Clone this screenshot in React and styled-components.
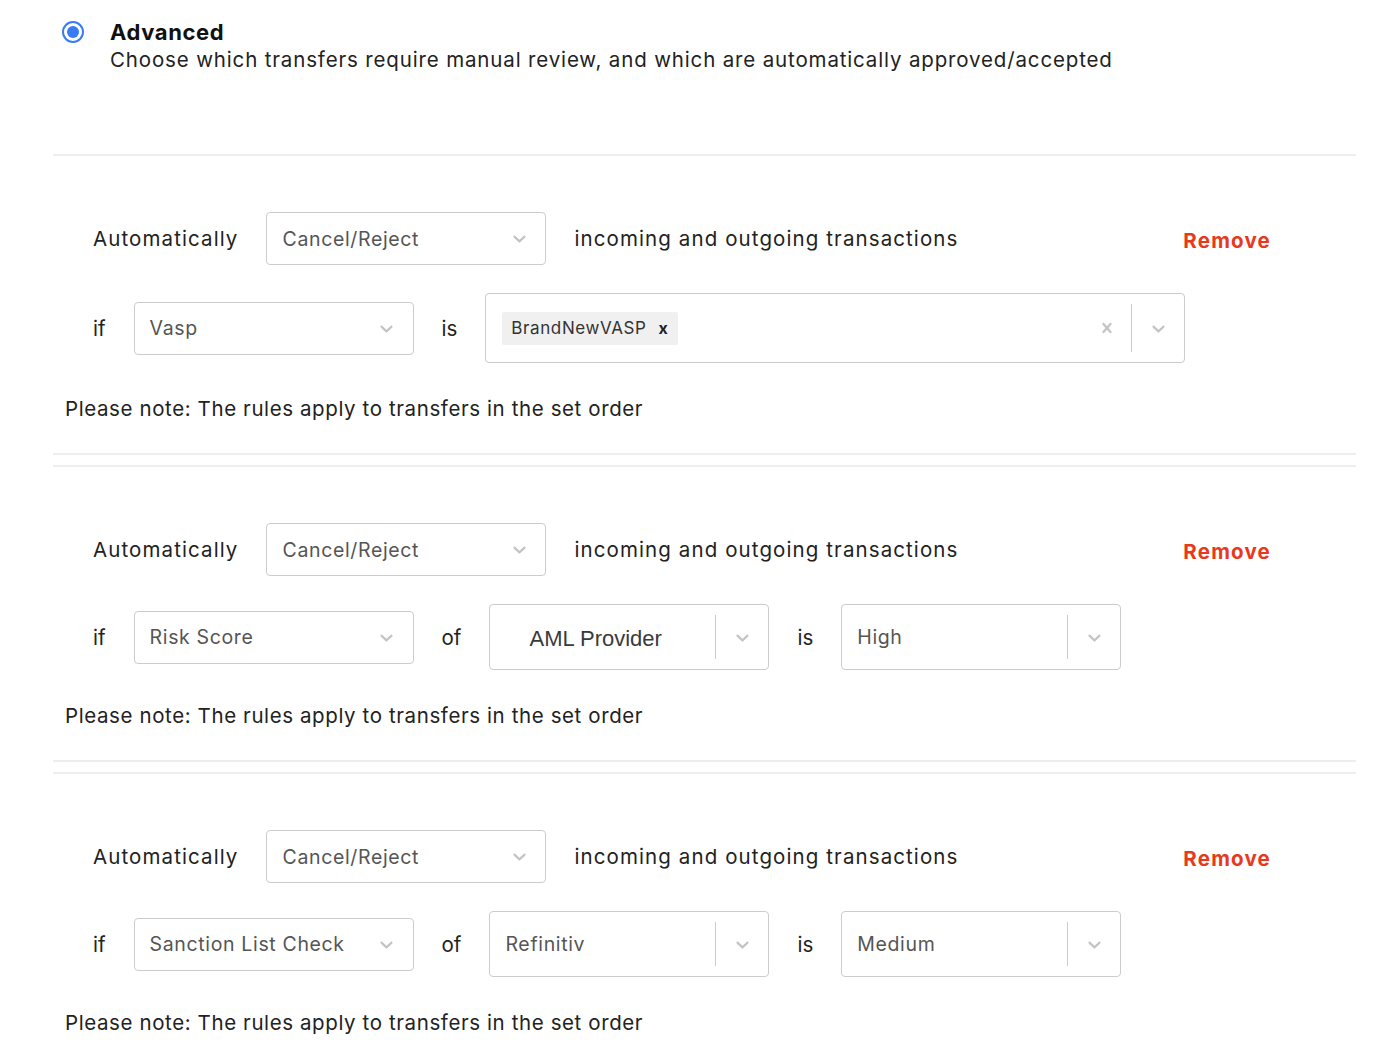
import React from "react";
import styled, { createGlobalStyle } from "styled-components";

const GlobalStyle = createGlobalStyle`
  body {
    margin: 0;
    background: #fff;
    font-family: Inter, "Open Sans", sans-serif;
    color: #222;
  }
`;

const Page = styled.div`
  width: 1398px;
  height: 1064px;
  overflow: hidden;
`;

const Header = styled.div`
  display: flex;
  align-items: flex-start;
  gap: 26px;
  padding: 19px 0 0 62px;
`;

const Radio = styled.span`
  width: 22px;
  height: 22px;
  box-sizing: border-box;
  border-radius: 50%;
  border: 2px solid #3a7bf5;
  display: flex;
  align-items: center;
  justify-content: center;
  margin-top: 2px;
  &::after {
    content: "";
    width: 12px;
    height: 12px;
    border-radius: 50%;
    background: #3a7bf5;
  }
`;

const HeaderText = styled.div`
  display: flex;
  flex-direction: column;
`;

const Title = styled.div`
  font-size: 22px;
  font-weight: 700;
  line-height: 26px;
  letter-spacing: 0.6px;
  color: #111;
`;

const Description = styled.div`
  font-size: 20.5px;
  line-height: 30px;
  letter-spacing: 0.85px;
  color: #222;
`;

const RuleList = styled.div`
  margin: 79px 42px 0 53px;
`;

const Rule = styled.div`
  border-top: 2px solid #eeeeee;
  border-bottom: 2px solid #eeeeee;
  padding: 56px 0 32px;
  margin-bottom: 10px;
`;

const Row = styled.div`
  display: flex;
  align-items: center;
  gap: 28px;
  padding-left: 40px;
  margin-bottom: 28px;
`;

const Label = styled.span`
  font-size: 20.5px;
  letter-spacing: ${(p) => (p.$short ? 0 : 1.1)}px;
  color: #222;
`;

const Remove = styled.button`
  margin-left: auto;
  margin-right: 85px;
  margin-top: 3px;
  border: none;
  background: none;
  padding: 0;
  font-family: inherit;
  font-size: 20.5px;
  font-weight: 700;
  letter-spacing: 1.2px;
  color: #e8391d;
  cursor: pointer;
`;

const SelectBox = styled.div`
  box-sizing: border-box;
  width: ${(p) => p.$width}px;
  height: ${(p) => p.$height}px;
  border: 1px solid #cccccc;
  border-radius: 4px;
  display: flex;
  align-items: center;
  background: #fff;
`;

const Value = styled.div`
  flex: 1;
  padding-left: ${(p) => (p.$legacy ? 39 : 15)}px;
  font-family: ${(p) =>
    p.$legacy ? '"Liberation Sans", Arial, sans-serif' : "inherit"};
  font-size: ${(p) => (p.$legacy ? 22 : 19.5)}px;
  letter-spacing: ${(p) => (p.$legacy ? 0 : 0.65)}px;
  color: ${(p) => (p.$legacy ? "#3a3a3a" : "#555")};
  margin-top: ${(p) => (p.$legacy ? 4 : 0)}px;
  white-space: nowrap;
`;

const Chips = styled.div`
  flex: 1;
  display: flex;
  padding-left: 16px;
`;

const Chip = styled.div`
  display: flex;
  align-items: center;
  height: 33px;
  background: #f0f0f0;
  border-radius: 2px;
  padding: 0 10px 0 9px;
  gap: 12px;
  font-size: 17px;
  letter-spacing: 0.6px;
  color: #333;
`;

const ChipClose = styled.span`
  font-weight: 700;
  font-size: 16px;
  color: #222;
`;

const IconSlot = styled.div`
  display: flex;
  align-items: center;
  justify-content: center;
  width: ${(p) => p.$w || 52}px;
  color: #c4c4c4;
`;

const Separator = styled.span`
  width: 1px;
  align-self: stretch;
  margin: 10px 0;
  background: #cccccc;
`;

const Note = styled.div`
  padding: 6px 0 0 12px;
  font-size: 20.5px;
  line-height: 24px;
  letter-spacing: 0.6px;
  color: #222;
`;

const Chevron = () => (
  <svg width="21" height="21" viewBox="0 0 20 20" fill="currentColor">
    <path d="M4.516 7.548c0.436-0.446 1.043-0.481 1.576 0l3.908 3.747 3.908-3.747c0.533-0.481 1.141-0.446 1.574 0 0.436 0.445 0.408 1.197 0 1.615-0.406 0.418-4.695 4.502-4.695 4.502-0.217 0.223-0.502 0.335-0.787 0.335s-0.57-0.112-0.789-0.335c0 0-4.287-4.084-4.695-4.502s-0.436-1.17 0-1.615z" />
  </svg>
);

const Cross = () => (
  <svg width="20" height="20" viewBox="0 0 20 20" fill="currentColor">
    <path d="M14.348 14.849c-0.469 0.469-1.229 0.469-1.697 0l-2.651-3.030-2.651 3.029c-0.469 0.469-1.229 0.469-1.697 0-0.469-0.469-0.469-1.229 0-1.697l2.758-3.15-2.759-3.152c-0.469-0.469-0.469-1.228 0-1.697s1.228-0.469 1.697 0l2.652 3.031 2.651-3.031c0.469-0.469 1.228-0.469 1.697 0s0.469 1.229 0 1.697l-2.758 3.152 2.758 3.15c0.469 0.469 0.469 1.229 0 1.698z" />
  </svg>
);

const Select = ({ value, width = 280, height = 53, divided, legacy }) => (
  <SelectBox $width={width} $height={height}>
    <Value $legacy={legacy}>{value}</Value>
    {divided && <Separator />}
    <IconSlot>
      <Chevron />
    </IconSlot>
  </SelectBox>
);

const MultiSelect = ({ values }) => (
  <SelectBox $width={700} $height={70}>
    <Chips>
      {values.map((v) => (
        <Chip key={v}>
          {v}
          <ChipClose>x</ChipClose>
        </Chip>
      ))}
    </Chips>
    <IconSlot $w={48}>
      <Cross />
    </IconSlot>
    <Separator />
    <IconSlot>
      <Chevron />
    </IconSlot>
  </SelectBox>
);

const rules = [
  {
    action: "Cancel/Reject",
    field: "Vasp",
    vasps: ["BrandNewVASP"],
  },
  {
    action: "Cancel/Reject",
    field: "Risk Score",
    provider: "AML Provider",
    legacy: true,
    level: "High",
  },
  {
    action: "Cancel/Reject",
    field: "Sanction List Check",
    provider: "Refinitiv",
    level: "Medium",
  },
];

export default function App() {
  return (
    <Page>
      <GlobalStyle />
      <Header>
        <Radio />
        <HeaderText>
          <Title>Advanced</Title>
          <Description>
            Choose which transfers require manual review, and which are
            automatically approved/accepted
          </Description>
        </HeaderText>
      </Header>
      <RuleList>
        {rules.map((rule, i) => (
          <Rule key={i}>
            <Row>
              <Label>Automatically</Label>
              <Select value={rule.action} />
              <Label>incoming and outgoing transactions</Label>
              <Remove>Remove</Remove>
            </Row>
            <Row>
              <Label $short>if</Label>
              <Select value={rule.field} />
              {rule.vasps ? (
                <>
                  <Label $short>is</Label>
                  <MultiSelect values={rule.vasps} />
                </>
              ) : (
                <>
                  <Label $short>of</Label>
                  <Select
                    value={rule.provider}
                    height={66}
                    divided
                    legacy={rule.legacy}
                  />
                  <Label $short>is</Label>
                  <Select value={rule.level} height={66} divided />
                </>
              )}
            </Row>
            <Note>Please note: The rules apply to transfers in the set order</Note>
          </Rule>
        ))}
      </RuleList>
    </Page>
  );
}
